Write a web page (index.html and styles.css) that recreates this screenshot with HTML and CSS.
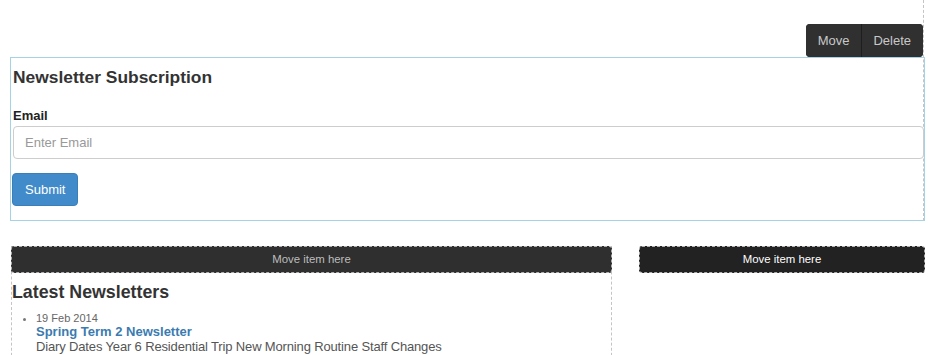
FILE: index.html
```html
<!DOCTYPE html>
<html>
<head>
<meta charset="utf-8">
<link rel="stylesheet" href="styles.css">
</head>
<body>
<div class="page">
  <div class="module">
    <div class="toolbar">
      <div class="btn-group">
        <button class="tb-btn">Move</button>
        <button class="tb-btn">Delete</button>
      </div>
    </div>
    <div class="box">
      <h2 class="box-title">Newsletter Subscription</h2>
      <label class="label" for="email">Email</label>
      <input class="input" id="email" type="text" placeholder="Enter Email">
      <button class="submit">Submit</button>
    </div>
  </div>
  <div class="row">
    <div class="col-main">
      <div class="drop drop-light">Move item here</div>
      <h3 class="list-title">Latest Newsletters</h3>
      <ul class="news">
        <li>
          <div class="date">19 Feb 2014</div>
          <a class="news-link" href="#">Spring Term 2 Newsletter</a>
          <div class="desc">Diary Dates Year 6 Residential Trip New Morning Routine Staff Changes</div>
        </li>
      </ul>
    </div>
    <div class="col-side">
      <div class="drop drop-dark">Move item here</div>
    </div>
  </div>
</div>
</body>
</html>
```

FILE: styles.css
```css
html, body {
  margin: 0;
  padding: 0;
  background: #fff;
  font-family: "Liberation Sans", Arial, sans-serif;
  color: #333;
  overflow: hidden;
}
.page {
  padding-left: 10px;
  width: 915px;
}
.module {
  border-right: 1px dashed #c4c4c4;
  width: 913px;
  padding-top: 24px;
}
.toolbar {
  display: flex;
  justify-content: flex-end;
}
.btn-group {
  display: flex;
  height: 33px;
  border-radius: 4px;
  overflow: hidden;
  background: #303030;
}
.tb-btn {
  background: #303030;
  color: #c8c8c8;
  font-family: "Liberation Sans", Arial, sans-serif;
  font-size: 13px;
  border: 0;
  padding: 0 12px;
  margin: 0;
}
.tb-btn + .tb-btn {
  border-left: 1px solid #1e1e1e;
  padding: 0 12px 0 11px;
}
.box {
  border: 1px solid #a6d3e3;
  margin-right: -2px;
  padding: 0 0 14px 1px;
  display: flex;
  flex-direction: column;
  align-items: flex-start;
}
.box-title {
  margin: 9px 0 0 1px;
  font-size: 17.4px;
  line-height: 20px;
  font-weight: bold;
  color: #333;
}
.label {
  margin: 19px 0 0 1px;
  font-size: 13px;
  line-height: 20px;
  font-weight: bold;
  color: #222;
}
.input {
  box-sizing: border-box;
  align-self: stretch;
  margin-left: 1px;
  height: 33px;
  border: 1px solid #cdcdcd;
  border-radius: 4px;
  padding: 0 11px;
  font-family: "Liberation Sans", Arial, sans-serif;
  font-size: 13px;
  color: #555;
  outline: none;
}
.input::placeholder {
  color: #999;
}
.submit {
  margin-top: 14px;
  height: 33px;
  padding: 0 12px;
  background: #428bca;
  border: 1px solid #3a7fba;
  border-radius: 4px;
  color: #fff;
  font-family: "Liberation Sans", Arial, sans-serif;
  font-size: 13px;
}
.row {
  display: grid;
  grid-template-columns: 601px 286px;
  gap: 27px;
  margin-top: 25px;
  padding-left: 1px;
}
.col-main {
  border-left: 1px dashed #c4c4c4;
  border-right: 1px dashed #c4c4c4;
  height: 120px;
}
.drop {
  box-sizing: border-box;
  height: 27px;
  border: 1px dashed #b0b0b0;
  border-radius: 3px;
  font-size: 11.4px;
  line-height: 25px;
  text-align: center;
}
.drop-light {
  background: #2f2f2f;
  color: #bdbdbd;
  margin: 0 -1px;
}
.drop-dark {
  background: #222;
  color: #fff;
}
.list-title {
  margin: 9px 0 0 0;
  font-size: 17.8px;
  line-height: 20px;
  font-weight: bold;
  color: #333;
}
.news {
  margin: 10px 0 0 0;
  padding-left: 24px;
  color: #777;
  font-size: 11px;
}
.date {
  font-size: 11px;
  line-height: 13px;
  color: #666;
}
.news-link {
  display: block;
  font-size: 13px;
  line-height: 14px;
  font-weight: bold;
  color: #3b7bb0;
  text-decoration: none;
}
.desc {
  font-size: 13px;
  letter-spacing: -0.15px;
  line-height: 16px;
  color: #555;
}
```
